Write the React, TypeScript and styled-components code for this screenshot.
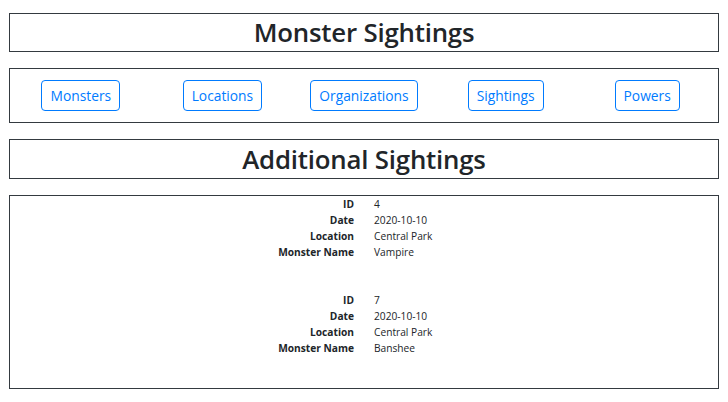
import styled, { createGlobalStyle } from "styled-components"

const GlobalStyle = createGlobalStyle`
  body {
    margin: 0;
    background: #fff;
    color: #212529;
    font-family: "Open Sans", "Noto Sans", sans-serif;
  }
`

const Page = styled.div`
  padding: 13px 9px;
  display: flex;
  flex-direction: column;
  gap: 16px;
`

const Panel = styled.section`
  border: 1px solid #343a40;
`

const Title = styled.h1<{ $height: number }>`
  margin: 0;
  text-align: center;
  font-weight: 600;
  font-size: 25.8px;
  letter-spacing: -0.2px;
  line-height: ${(p) => p.$height}px;
`

const Nav = styled.nav`
  display: grid;
  grid-template-columns: repeat(5, 1fr);
  justify-items: center;
  align-items: center;
  padding: 11px 0;
`

const NavButton = styled.button`
  font-family: inherit;
  font-size: 13.8px;
  line-height: 21px;
  padding: 4px 8px;
  color: #007bff;
  background: #fff;
  border: 1px solid #007bff;
  border-radius: 4px;
  cursor: pointer;
`

const List = styled.div`
  height: 192px;
`

const Record = styled.dl`
  margin: 0 0 32px;
  display: grid;
  grid-template-columns: 1fr 1fr;
  column-gap: 20px;
  font-size: 10.2px;
  line-height: 16px;
`

const Label = styled.dt`
  text-align: right;
  font-weight: 700;
`

const Value = styled.dd`
  margin: 0;
`

const sightings = [
  { id: 4, date: "2020-10-10", location: "Central Park", monster: "Vampire" },
  { id: 7, date: "2020-10-10", location: "Central Park", monster: "Banshee" },
]

const links = ["Monsters", "Locations", "Organizations", "Sightings", "Powers"]

export default function App() {
  return (
    <>
      <GlobalStyle />
      <Page>
        <Panel>
          <Title $height={37}>Monster Sightings</Title>
        </Panel>
        <Panel>
          <Nav>
            {links.map((l) => (
              <NavButton key={l}>{l}</NavButton>
            ))}
          </Nav>
        </Panel>
        <Panel>
          <Title $height={38}>Additional Sightings</Title>
        </Panel>
        <Panel>
          <List>
            {sightings.map((s) => (
              <Record key={s.id}>
                <Label>ID</Label>
                <Value>{s.id}</Value>
                <Label>Date</Label>
                <Value>{s.date}</Value>
                <Label>Location</Label>
                <Value>{s.location}</Value>
                <Label>Monster Name</Label>
                <Value>{s.monster}</Value>
              </Record>
            ))}
          </List>
        </Panel>
      </Page>
    </>
  )
}
